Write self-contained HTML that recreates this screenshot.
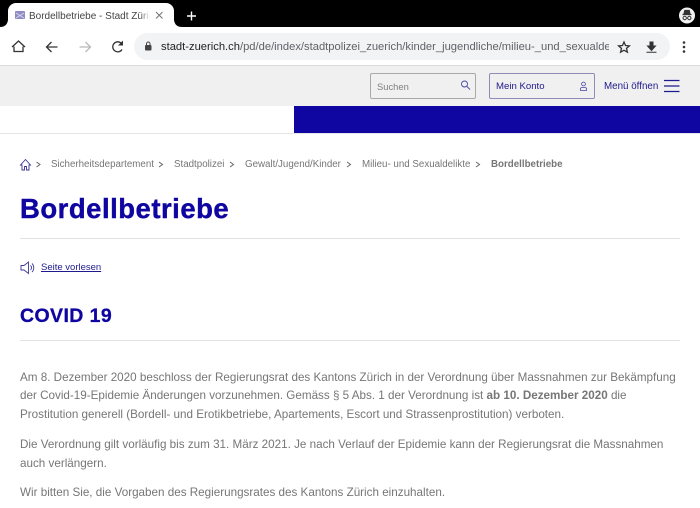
<!DOCTYPE html>
<html lang="de">
<head>
<meta charset="utf-8">
<title>Bordellbetriebe</title>
<style>
html,body{margin:0;padding:0;background:#fff;}
body{width:700px;height:508px;position:relative;overflow:hidden;font-family:"Liberation Sans",Arial,sans-serif;filter:blur(.25px);}
.a{position:absolute;white-space:nowrap;}
.b{position:absolute;}
svg{position:absolute;overflow:visible;}
.crumb{font-size:9.75px;color:#767676;top:158px;line-height:13px;}
.p{font-size:11.66px;color:#767676;left:20px;line-height:16px;}
</style>
</head>
<body>
<!-- browser chrome -->
<div class="b" style="left:0;top:0;width:700px;height:27px;background:#000;"></div>
<div class="b" style="left:8px;top:3px;width:166px;height:24px;background:#fff;border-radius:8px 8px 0 0;"></div>
<div class="b" style="left:134px;top:33px;width:536px;height:27px;background:#f1f3f4;border-radius:14px;"></div>
<svg style="left:0;top:0" width="700" height="66">
  <path d="M0 27 Q7 27 8 20 L8 27Z" fill="#fff"/>
  <path d="M174 20 Q175 27 182 27 L174 27Z" fill="#fff"/>
  <rect x="15" y="11" width="10" height="8" rx="1" fill="#8f8bc4"/>
  <path d="M16 13l8 5M24 13l-8 5" stroke="#d8d6ee" stroke-width="1"/>
  <path d="M156 12l6.500 6.500M162.500 12l-6.500 6.500" stroke="#6f7378" stroke-width="1" fill="none"/>
  <path d="M191.500 11.500v9M187 16h9" stroke="#fff" stroke-width="1.400"/>
  <circle cx="687" cy="15.500" r="8" fill="#f1f1f1"/>
  <path d="M682.500 14.500h9M684 14l.8-3.500h4.400l.8 3.500" stroke="#333" stroke-width="1.200" fill="#333"/>
  <circle cx="684.700" cy="18" r="1.700" fill="none" stroke="#333" stroke-width="1"/>
  <circle cx="689.300" cy="18" r="1.700" fill="none" stroke="#333" stroke-width="1"/>
  <!-- toolbar icons -->
  <path d="M14 47V52H23V47M12 47.500L18.500 41.500L25 47.500" fill="none" stroke="#333" stroke-width="1.300" transform="translate(0,-0.500)"/>
  <path d="M57.500 47H46.500M51.500 42L46.500 47L51.500 52" fill="none" stroke="#333" stroke-width="1.300"/>
  <path d="M79.500 47H90.500M85.500 42L90.500 47L85.500 52" fill="none" stroke="#b9b9b9" stroke-width="1.300"/>
  <path d="M122 49.500A5 5 0 1 1 121.500 43.500" fill="none" stroke="#333" stroke-width="1.300"/>
  <path d="M123 40.500V45.500H118Z" fill="#333"/>
  <rect x="145" y="45" width="6.500" height="5.500" rx="1" fill="#444"/>
  <path d="M146.500 45v-1.200a1.700 1.700 0 0 1 3.500 0V45" fill="none" stroke="#444" stroke-width="1"/>
  <path d="M624 42l1.500 3.500 3.900.4-2.900 2.500.9 3.800-3.400-2-3.400 2 .9-3.800-2.900-2.500 3.900-.4z" fill="none" stroke="#333" stroke-width="1.300"/>
  <path d="M650 42h3v4h2.500L651.500 50.500 647.500 46h2.500zM646.500 52.200h10" fill="#333" stroke="#333" stroke-width="1"/>
  <circle cx="684" cy="42.500" r="1.300" fill="#333"/>
  <circle cx="684" cy="47" r="1.300" fill="#333"/>
  <circle cx="684" cy="51.500" r="1.300" fill="#333"/>
</svg>
<div class="a" style="left:29px;top:10px;width:121px;overflow:hidden;font-size:10px;line-height:13px;color:#444;">Bordellbetriebe - Stadt Zürich</div>
<div class="b" style="left:140px;top:8px;width:10px;height:15px;background:linear-gradient(90deg,rgba(255,255,255,0),#fff);"></div>
<div class="a" style="left:161px;top:40px;width:448px;overflow:hidden;font-size:11.200px;line-height:14px;color:#5f6368;"><span style="color:#222">stadt-zuerich.ch</span>/pd/de/index/stadtpolizei_zuerich/kinder_jugendliche/milieu-_und_sexualdelikte</div>
<div class="b" style="left:0;top:65px;width:700px;height:1px;background:#dcdcdc;"></div>

<!-- site header -->
<div class="b" style="left:0;top:66px;width:700px;height:40px;background:#f0f0f0;"></div>
<div class="b" style="left:370px;top:73px;width:104px;height:24px;border:1px solid #a9a9a9;border-radius:2px;"></div>
<div class="a" style="left:377px;top:80px;font-size:9.400px;line-height:13px;color:#808080;">Suchen</div>
<div class="b" style="left:489px;top:73px;width:104px;height:24px;border:1px solid #8f8cb8;border-radius:2px;"></div>
<div class="a" style="left:496px;top:80px;font-size:9.600px;line-height:13px;color:#1f1a8c;">Mein Konto</div>
<div class="a" style="left:604px;top:80px;font-size:9.800px;line-height:13px;color:#1f1a8c;">Menü öffnen</div>
<svg style="left:0;top:66px" width="700" height="40">
  <circle cx="464.500" cy="18" r="3" fill="none" stroke="#4a46a0" stroke-width=".9"/>
  <path d="M467 20.500l3 3" stroke="#4a46a0" stroke-width=".9"/>
  <circle cx="583.500" cy="18" r="1.900" fill="none" stroke="#4a46a0" stroke-width=".8"/>
  <path d="M580.500 24.500v-1.500a1.500 1.500 0 0 1 1.500-1.500h3a1.500 1.500 0 0 1 1.500 1.500v1.500z" fill="none" stroke="#4a46a0" stroke-width=".8"/>
  <path d="M664 14.500h15.500M664 20h15.500M664 25.500h15.500" stroke="#1f1a8c" stroke-width="1.300"/>
</svg>
<div class="b" style="left:294px;top:106px;width:406px;height:27px;background:#0f05a0;"></div>
<div class="b" style="left:0;top:133px;width:700px;height:1px;background:#e4e4e4;"></div>

<!-- breadcrumb -->
<svg style="left:0;top:150px" width="700" height="30">
  <path d="M22 20v-5h-1.500l5-5.500 5 5.500H29V20h-2.500v-3.500h-2V20z" fill="none" stroke="#3a3696" stroke-width=".9"/>
  <g fill="none" stroke="#666" stroke-width="1">
    <path d="M36.500 12l3.500 2.500-3.500 2.500"/>
    <path d="M159 12l3.500 2.500-3.500 2.500"/>
    <path d="M230 12l3.500 2.500-3.500 2.500"/>
    <path d="M347 12l3.500 2.500-3.500 2.500"/>
    <path d="M476 12l3.500 2.500-3.500 2.500"/>
  </g>
</svg>
<div class="a crumb" style="left:51px;">Sicherheitsdepartement</div>
<div class="a crumb" style="left:174px;">Stadtpolizei</div>
<div class="a crumb" style="left:245px;">Gewalt/Jugend/Kinder</div>
<div class="a crumb" style="left:362px;">Milieu- und Sexualdelikte</div>
<div class="a crumb" style="left:491px;font-weight:bold;">Bordellbetriebe</div>

<!-- title -->
<div class="a" style="left:20px;top:193px;font-size:27.500px;letter-spacing:.5px;line-height:32px;font-weight:bold;color:#0f05a0;-webkit-text-stroke:.4px #0f05a0;">Bordellbetriebe</div>
<div class="b" style="left:20px;top:238px;width:660px;height:1px;background:#e2e2e2;"></div>

<!-- read aloud -->
<svg style="left:0;top:260px" width="40" height="16">
  <path d="M21 5.500h3l4.500-3.500v11.500L24 10h-3z" fill="none" stroke="#3a3696" stroke-width=".9"/>
  <path d="M30.500 5.500a3 3 0 0 1 0 4.500M32 3.500a6 6 0 0 1 0 8.500" fill="none" stroke="#3a3696" stroke-width=".9"/>
</svg>
<div class="a" style="left:41px;top:261px;font-size:9.500px;line-height:13px;color:#1f1a8c;text-decoration:underline;">Seite vorlesen</div>

<!-- covid -->
<div class="a" style="left:20px;top:304px;font-size:19.500px;letter-spacing:.4px;line-height:24px;font-weight:bold;color:#0f05a0;-webkit-text-stroke:.3px #0f05a0;">COVID 19</div>
<div class="b" style="left:20px;top:340px;width:660px;height:1px;background:#e2e2e2;"></div>

<div class="a p" style="top:370px;">Am 8. Dezember 2020 beschloss der Regierungsrat des Kantons Zürich in der Verordnung über Massnahmen zur Bekämpfung</div>
<div class="a p" style="top:388px;">der Covid-19-Epidemie Änderungen vorzunehmen. Gemäss § 5 Abs. 1 der Verordnung ist <b>ab 10. Dezember 2020</b> die</div>
<div class="a p" style="top:407px;">Prostitution generell (Bordell- und Erotikbetriebe, Apartements, Escort und Strassenprostitution) verboten.</div>
<div class="a p" style="top:437px;">Die Verordnung gilt vorläufig bis zum 31. März 2021. Je nach Verlauf der Epidemie kann der Regierungsrat die Massnahmen</div>
<div class="a p" style="top:456px;">auch verlängern.</div>
<div class="a p" style="top:485px;">Wir bitten Sie, die Vorgaben des Regierungsrates des Kantons Zürich einzuhalten.</div>
</body>
</html>
